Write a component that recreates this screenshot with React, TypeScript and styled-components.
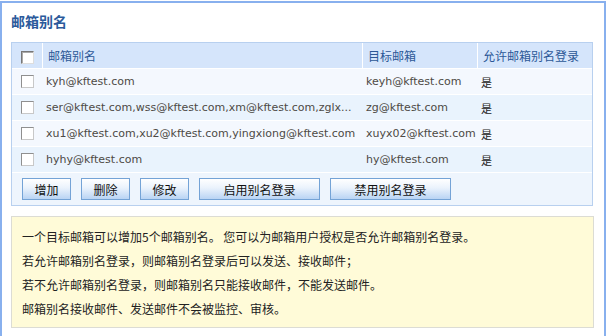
import styled, { createGlobalStyle } from 'styled-components';

const GlobalStyle = createGlobalStyle`
    body{
        margin:0;
        background:#fff;
        font-family:"Noto Sans CJK SC", "Noto Sans", sans-serif;
    }
`

const rows = [
    { alias: 'kyh@kftest.com', target: 'keyh@kftest.com' },
    { alias: 'ser@kftest.com,wss@kftest.com,xm@kftest.com,zglx...', target: 'zg@kftest.com' },
    { alias: 'xu1@kftest.com,xu2@kftest.com,yingxiong@kftest.com', target: 'xuyx02@kftest.com' },
    { alias: 'hyhy@kftest.com', target: 'hy@kftest.com' },
]

const buttons = [
    { label: '增加', wide: false },
    { label: '删除', wide: false },
    { label: '修改', wide: false },
    { label: '启用别名登录', wide: true },
    { label: '禁用别名登录', wide: true },
]

const notes = [
    '一个目标邮箱可以增加5个邮箱别名。 您可以为邮箱用户授权是否允许邮箱别名登录。',
    '若允许邮箱别名登录，则邮箱别名登录后可以发送、接收邮件；',
    '若不允许邮箱别名登录，则邮箱别名只能接收邮件，不能发送邮件。',
    '邮箱别名接收邮件、发送邮件不会被监控、审核。',
]

const App = () => {
    return (
        <>
            <GlobalStyle />
            <Frame>
                <Title>邮箱别名</Title>
                <Panel>
                    <Table>
                        <colgroup>
                            <col style={{ width: 30 }} />
                            <col style={{ width: 320 }} />
                            <col style={{ width: 115 }} />
                            <col />
                        </colgroup>
                        <thead>
                            <tr>
                                <HeadCell $center><Check $head /></HeadCell>
                                <HeadCell>邮箱别名</HeadCell>
                                <HeadCell>目标邮箱</HeadCell>
                                <HeadCell>允许邮箱别名登录</HeadCell>
                            </tr>
                        </thead>
                        <tbody>
                            {rows.map((r, i) => (
                                <Row key={i} $alt={i % 2 === 1}>
                                    <Cell $center><Check /></Cell>
                                    <Cell>{r.alias}</Cell>
                                    <Cell>{r.target}</Cell>
                                    <Cell $cjk>是</Cell>
                                </Row>
                            ))}
                        </tbody>
                    </Table>
                    <ButtonBar>
                        {buttons.map(b => (
                            <Button key={b.label} $wide={b.wide}>{b.label}</Button>
                        ))}
                    </ButtonBar>
                </Panel>
                <Notice>
                    {notes.map(n => <p key={n}>{n}</p>)}
                </Notice>
            </Frame>
        </>
    )
}

const Frame = styled.div`
    margin-top:1px;
    width:606px;
    height:335px;
    box-sizing:border-box;
    border:2px solid #88b0ee;
    border-bottom:none;
    padding:8px 10px 0 9px;
`

const Title = styled.h1`
    margin:0;
    height:20px;
    line-height:20px;
    font-size:14px;
    font-weight:bold;
    color:#2b5a9b;
`

const Panel = styled.div`
    margin-top:11px;
    width:582px;
    box-sizing:border-box;
    border:1px solid #b8d0ef;
`

const Table = styled.table`
    width:100%;
    border-collapse:separate;
    border-spacing:0;
    table-layout:fixed;
`

const HeadCell = styled.th<{ $center?: boolean }>`
    height:25px;
    padding:0 5px;
    background:#d5e5fb;
    border-bottom:1px solid #fff;
    border-left:1px solid #fff;
    font-size:12px;
    font-weight:normal;
    color:#2c5897;
    text-align:${p => p.$center ? 'center' : 'left'};
    &:first-child{ border-left:none; }
`

const Row = styled.tr<{ $alt: boolean }>`
    background:${p => p.$alt ? '#e9f3fd' : '#f4f8fe'};
`

const Cell = styled.td<{ $center?: boolean, $cjk?: boolean }>`
    height:25px;
    padding:0 4px;
    border-bottom:1px solid #fff;
    font-family:${p => p.$cjk ? '"Noto Sans CJK SC", sans-serif' : '"DejaVu Sans", Verdana, sans-serif'};
    font-size:11px;
    color:${p => p.$cjk ? '#222' : '#4d4a45'};
    text-align:${p => p.$center ? 'center' : 'left'};
    white-space:nowrap;
    overflow:hidden;
`

const Check = styled.span<{ $head?: boolean }>`
    display:inline-block;
    vertical-align:middle;
    width:13px;
    height:13px;
    box-sizing:border-box;
    background:#fff;
    border:1px solid;
    border-color:${p => p.$head ? '#777 #ddd #ddd #777' : '#8f8f8f #c8c8c8 #c8c8c8 #8f8f8f'};
    box-shadow:${p => p.$head ? 'inset 1px 1px 0 #aaa' : 'none'};
`

const ButtonBar = styled.div`
    display:flex;
    align-items:center;
    gap:10px;
    height:32px;
    padding:0 10px;
    background:#eef5fd;
`

const Button = styled.button<{ $wide: boolean }>`
    width:${p => p.$wide ? '121px' : '49px'};
    height:22px;
    padding:0;
    border:1px solid #74a3d6;
    background:linear-gradient(#ffffff 0%, #eaf2fc 45%, #b9d4f4 100%);
    font-family:"Noto Sans CJK SC", sans-serif;
    font-size:12px;
    color:#111;
`

const Notice = styled.div`
    margin-top:10px;
    width:583px;
    height:112px;
    box-sizing:border-box;
    border:1px solid #dcdcd4;
    background:#fffbd8;
    padding:8px 10px 0;
    font-size:12px;
    color:#222;

    p{
        margin:0;
        line-height:24px;
    }
`

export default App
